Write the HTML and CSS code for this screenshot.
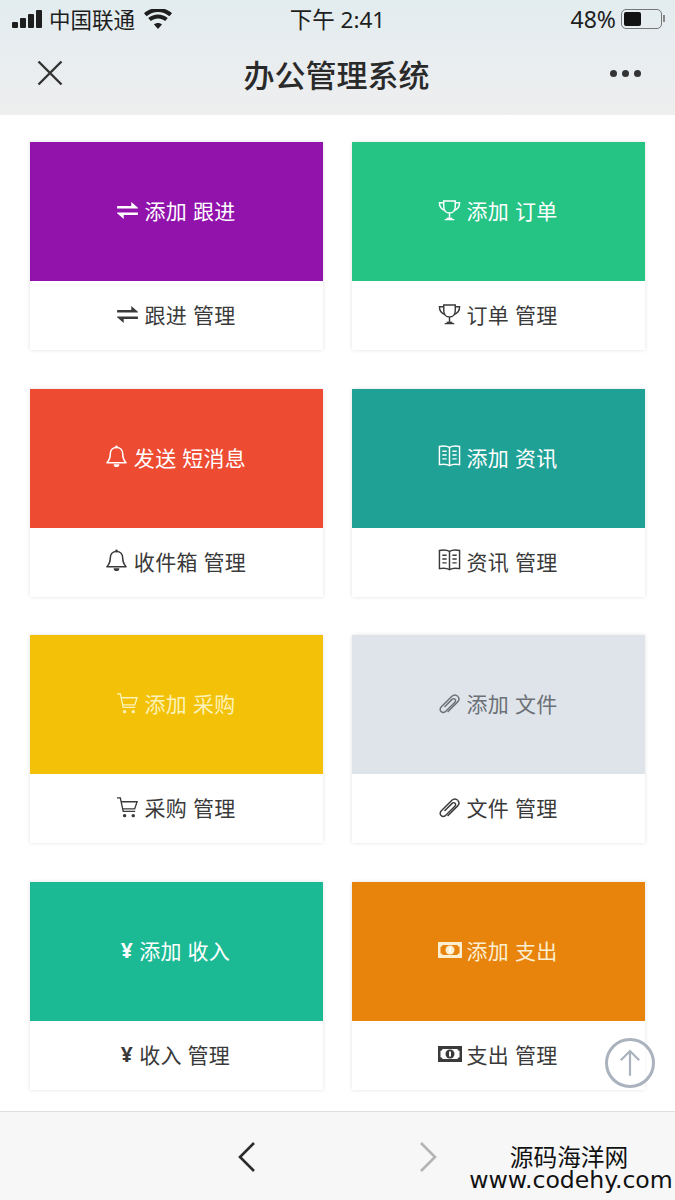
FILE: index.html
```html
<!DOCTYPE html>
<html lang="zh-CN">
<head>
  <meta charset="UTF-8">
  <meta name="viewport" content="width=device-width, initial-scale=1.0">
  <title>办公管理系统</title>
  <link rel="stylesheet" href="styles.css">
</head>
<body>

  <svg class="icon-defs" width="0" height="0">
    <symbol id="i-exchange" viewBox="0 0 24 18">
      <path d="M1 4.200h15V0l7 6v.8H1z" fill="currentColor"/>
      <path d="M23 11v2.800H8V18l-7-6v-1z" fill="currentColor"/>
    </symbol>
    <symbol id="i-trophy" viewBox="0 0 24 24">
      <g fill="none" stroke="currentColor" stroke-width="1.5">
        <path d="M6 2h12v6c0 4-2.500 6.500-6 6.500S6 12 6 8z"/>
        <path d="M6 4H1.500c0 4 1.500 7 6 8M18 4h4.500c0 4-1.500 7-6 8"/>
        <path d="M12 14.500V20M7 21.500h10"/>
      </g>
      <path d="M9 19.500h6v2H9z" fill="currentColor"/>
    </symbol>
    <symbol id="i-bell" viewBox="0 0 24 24">
      <path d="M12 2.500c-4 0-6.500 3-6.500 7 0 4.500-1.500 7-3.500 9h20c-2-2-3.500-4.500-3.500-9 0-4-2.500-7-6.500-7z" fill="none" stroke="currentColor" stroke-width="1.600" stroke-linejoin="round"/>
      <path d="M9 20h6c0 2-1.300 3-3 3s-3-1-3-3z" fill="currentColor"/>
      <circle cx="12" cy="2" r="1.400" fill="currentColor"/>
    </symbol>
    <symbol id="i-book" viewBox="0 0 24 24">
      <g fill="none" stroke="currentColor" stroke-width="1.500">
        <path d="M1.500 1.500c4-.8 7.500-.8 10.500 1 3-1.800 6.500-1.800 10.500-1v19c-4-.8-7.500-.8-10.500 1-3-1.800-6.500-1.800-10.500-1z"/>
        <path d="M12 2.500v19M4.500 6.500h4.500M4.500 10.500h4.500M4.500 14.500h4.500M15 6.500h4.500M15 10.500h4.500M15 14.500h4.500"/>
      </g>
    </symbol>
    <symbol id="i-cart" viewBox="0 0 24 24">
      <path d="M1 2h3.500l3 14h12.500M5.500 6h16.500l-2.500 7.500H7" fill="none" stroke="currentColor" stroke-width="1.400"/>
      <circle cx="9" cy="20.500" r="1.800" fill="currentColor"/>
      <circle cx="18" cy="20.500" r="1.800" fill="currentColor"/>
    </symbol>
    <symbol id="i-clip" viewBox="0 0 24 24">
      <path d="M20.500 4.500c-1.800-1.800-4.300-1.600-6 0L3.500 15.500c-1.500 1.500-1.700 3.500-.3 4.900s3.400 1.200 4.900-.3l9.500-9.500c1-1 1-2.300.2-3.100s-2.100-.8-3.100.2l-8 8" fill="none" stroke="currentColor" stroke-width="1.500"/>
      <path d="M20.500 4.500c1.800 1.800 1.600 4.200 0 5.800L10 20.800" fill="none" stroke="currentColor" stroke-width="1.500"/>
    </symbol>
    <symbol id="i-money" viewBox="0 0 24 16">
      <path fill-rule="evenodd" d="M0 0h24v16H0zM4.500 3c0 1-.9 1.800-2 1.800v6.400c1.100 0 2 .8 2 1.800h15c0-1 .9-1.800 2-1.800V4.800c-1.100 0-2-.8-2-1.800z" fill="currentColor"/>
      <circle cx="12" cy="8" r="4.500" fill="currentColor"/>
      <path d="M11 5.500h2v5h-2z" fill="#fff"/>
    </symbol>
  </svg>

  <div class="page">
    <header class="topbar">
      <div class="status">
        <div class="status-left">
          <span class="signal"><i></i><i></i><i></i><i></i></span>
          <span>中国联通</span>
          <svg class="wifi" viewBox="0 0 28 20">
            <path d="M14 20l-4-4.500c2.300-2 5.700-2 8 0zM6.800 12l-2.600-3c5.600-4.800 14-4.800 19.600 0l-2.600 3c-4.200-3.500-10.200-3.500-14.400 0zM2.600 7.200L0 4.200c8-7 20-7 28 0l-2.600 3c-6.500-5.700-16.300-5.700-22.800 0z" fill="currentColor"/>
          </svg>
        </div>
        <div class="status-time">下午 2:41</div>
        <div class="status-right">
          <span>48%</span>
          <span class="battery"><i></i></span>
          <span class="battery-cap"></span>
        </div>
      </div>
      <div class="navbar">
        <svg class="nav-close" viewBox="0 0 26 26">
          <path d="M1.500 1.500l23 23M24.500 1.500l-23 23" fill="none" stroke="currentColor" stroke-width="2.400"/>
        </svg>
        <h1>办公管理系统</h1>
        <div class="nav-more"><i></i><i></i><i></i></div>
      </div>
    </header>

    <main class="grid">
      <a class="card">
        <div class="card-top purple"><svg class="ic ic-ex"><use href="#i-exchange"/></svg>添加 跟进</div>
        <div class="card-bottom"><svg class="ic ic-ex"><use href="#i-exchange"/></svg>跟进 管理</div>
      </a>
      <a class="card">
        <div class="card-top green"><svg class="ic"><use href="#i-trophy"/></svg>添加 订单</div>
        <div class="card-bottom"><svg class="ic"><use href="#i-trophy"/></svg>订单 管理</div>
      </a>
      <a class="card">
        <div class="card-top red"><svg class="ic"><use href="#i-bell"/></svg>发送 短消息</div>
        <div class="card-bottom"><svg class="ic"><use href="#i-bell"/></svg>收件箱 管理</div>
      </a>
      <a class="card">
        <div class="card-top teal"><svg class="ic"><use href="#i-book"/></svg>添加 资讯</div>
        <div class="card-bottom"><svg class="ic"><use href="#i-book"/></svg>资讯 管理</div>
      </a>
      <a class="card">
        <div class="card-top yellow"><svg class="ic"><use href="#i-cart"/></svg>添加 采购</div>
        <div class="card-bottom"><svg class="ic"><use href="#i-cart"/></svg>采购 管理</div>
      </a>
      <a class="card">
        <div class="card-top grey"><svg class="ic"><use href="#i-clip"/></svg>添加 文件</div>
        <div class="card-bottom"><svg class="ic"><use href="#i-clip"/></svg>文件 管理</div>
      </a>
      <a class="card">
        <div class="card-top mint"><span class="yen">¥</span>添加 收入</div>
        <div class="card-bottom"><span class="yen">¥</span>收入 管理</div>
      </a>
      <a class="card">
        <div class="card-top orange"><svg class="ic ic-money"><use href="#i-money"/></svg>添加 支出</div>
        <div class="card-bottom"><svg class="ic ic-money"><use href="#i-money"/></svg>支出 管理</div>
      </a>
    </main>

    <footer class="toolbar">
      <svg class="arrow arrow-back" viewBox="0 0 20 32">
        <path d="M17 2L3 16l14 14" fill="none" stroke="currentColor" stroke-width="2.600"/>
      </svg>
      <svg class="arrow arrow-next" viewBox="0 0 20 32">
        <path d="M3 2l14 14L3 30" fill="none" stroke="currentColor" stroke-width="2.600"/>
      </svg>
    </footer>
  </div>

  <div class="to-top">
    <svg viewBox="0 0 24 30">
      <path d="M12 29V2M2 12L12 2l10 10" fill="none" stroke="currentColor" stroke-width="2.400"/>
    </svg>
  </div>

  <div class="watermark">
    <div class="wm-cn">源码海洋网</div>
    <div class="wm-url">www.codehy.com</div>
  </div>

</body>
</html>
```

FILE: styles.css
```css
* {
  box-sizing: border-box;
}

body {
  margin: 0;
  font-family: "Noto Sans", "Noto Sans CJK SC", sans-serif;
  background-color: #fff;
  color: #333;
}

.icon-defs {
  position: absolute;
}

.page {
  position: relative;
  width: 675px;
  height: 1200px;
  display: flex;
  flex-direction: column;
  overflow: hidden;
}

/* top bar */
.topbar {
  height: 115px;
  flex-shrink: 0;
  background: linear-gradient(180deg, #e2ecee 0%, #e8edf0 45%, #eeeeee 100%);
  color: #1e1e1e;
}

.status {
  height: 37px;
  padding: 0 10px 0 12px;
  display: grid;
  grid-template-columns: 1fr auto 1fr;
  align-items: center;
  font-size: 21.5px;
}

.status-left {
  display: flex;
  align-items: center;
  gap: 8px;
}

.status-time {
  font-size: 22.5px;
  margin-left: -2px;
}

.signal {
  display: flex;
  align-items: flex-end;
  gap: 2px;
  height: 18px;
  margin-right: -1px;
}

.signal i {
  width: 6px;
  background-color: #1e1e1e;
  border-radius: 1px;
}

.signal i:nth-child(1) { height: 6px; }
.signal i:nth-child(2) { height: 10px; }
.signal i:nth-child(3) { height: 14px; }
.signal i:nth-child(4) { height: 18px; }

.wifi {
  width: 28px;
  height: 20px;
  margin-left: 1px;
}

.status-right {
  display: flex;
  align-items: center;
  justify-content: flex-end;
  font-size: 23px;
}

.battery {
  width: 41px;
  height: 20px;
  margin-left: 5px;
  padding: 2px;
  border: 1.5px solid #777;
  border-radius: 5px;
}

.battery i {
  display: block;
  width: 17px;
  height: 100%;
  background-color: #111;
  border-radius: 2px;
}

.battery-cap {
  width: 2px;
  height: 7px;
  margin-left: 1px;
  background-color: #888;
}

.navbar {
  height: 78px;
  padding: 0 34px 6px 37px;
  display: flex;
  align-items: center;
  justify-content: space-between;
}

.navbar h1 {
  margin: 0;
  font-size: 31px;
  font-weight: 500;
  color: #2a2a2a;
}

.nav-close {
  width: 26px;
  height: 26px;
  color: #333;
}

.nav-more {
  display: flex;
  gap: 5px;
}

.nav-more i {
  width: 7px;
  height: 7px;
  border-radius: 50%;
  background-color: #333;
}

/* cards */
.grid {
  flex: 1;
  padding: 27px 30px 0;
  display: grid;
  grid-template-columns: 293px 293px;
  grid-auto-rows: 208px;
  column-gap: 29px;
  row-gap: 38.5px;
}

.card {
  display: flex;
  flex-direction: column;
  background-color: #fff;
  box-shadow: 0 0 4px rgba(0, 0, 0, 0.12);
}

.card-top,
.card-bottom {
  display: flex;
  align-items: center;
  justify-content: center;
  padding-bottom: 3px;
  padding-right: 2px;
  font-size: 21px;
  letter-spacing: 0.3px;
  white-space: pre;
}

.card-top {
  height: 139px;
  color: #fff;
}

.card-bottom {
  flex: 1;
  color: #3a3a3a;
}

.ic {
  width: 23px;
  height: 23px;
  margin-right: 6px;
  flex-shrink: 0;
}

.ic-ex {
  height: 17px;
}

.ic-money {
  width: 24px;
  height: 16px;
  margin-right: 5px;
}

.yen {
  margin-right: 6px;
  font-weight: 700;
  font-size: 21px;
}

.purple { background-color: #9213ac; }
.green { background-color: #25c485; }
.red { background-color: #ee4b33; }
.teal { background-color: #1fa196; }
.yellow { background-color: #f3c107; color: #fdf2b8; }
.grey { background-color: #dfe4ea; color: #6b7076; }
.mint { background-color: #1bba94; }
.orange { background-color: #e8830b; color: #fdeecf; }

/* bottom bar */
.toolbar {
  height: 89px;
  flex-shrink: 0;
  padding-top: 29px;
  padding-left: 237px;
  display: flex;
  align-items: flex-start;
  gap: 161px;
  background-color: #f7f7f7;
  border-top: 1px solid #dedede;
}

.arrow {
  width: 20px;
  height: 32px;
}

.arrow-back { color: #2b2b2b; }
.arrow-next { color: #b4b4b4; }

.to-top {
  position: absolute;
  left: 605px;
  top: 1038px;
  width: 50px;
  height: 50px;
  display: flex;
  align-items: center;
  justify-content: center;
  border: 3px solid #a9b2bd;
  border-radius: 50%;
  background-color: rgba(255, 255, 255, 0.6);
  color: #a9b2bd;
}

.to-top svg {
  width: 22px;
  height: 28px;
}

/* watermark over the bottom bar */
.watermark {
  position: absolute;
  left: 468px;
  top: 1145px;
  width: 206px;
  text-align: center;
  color: #111;
}

.wm-cn {
  padding-right: 4px;
  font-size: 23.7px;
  line-height: 24px;
}

.wm-url {
  font-family: "DejaVu Sans", sans-serif;
  font-size: 23.6px;
  line-height: 23px;
  white-space: nowrap;
}
```
